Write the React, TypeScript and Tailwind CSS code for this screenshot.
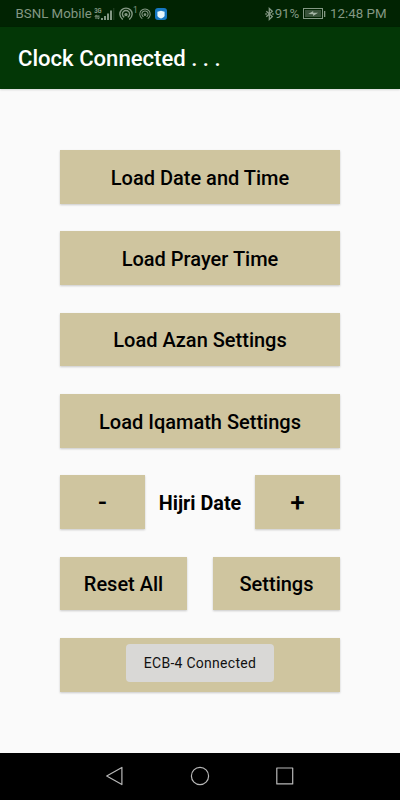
import type { ReactNode } from "react";
import { clsx } from "clsx";

function PadButton({ children, className }: { children?: ReactNode; className?: string }) {
  return (
    <button
      className={clsx(
        "flex h-[53.6px] items-center justify-center bg-[#cfc59f] pt-[1.5px] font-medium text-black shadow-[0_1px_2px_rgba(0,0,0,0.2)]",
        className
      )}
    >
      {children}
    </button>
  );
}

function SignalIcon() {
  return (
    <svg width="21" height="14" viewBox="0 0 21 14" fill="#849884">
      <text x="0.2" y="5.6" fontSize="7" fontWeight="700" fontFamily="Roboto, sans-serif" textLength="7.5" lengthAdjust="spacingAndGlyphs">3G</text>
      <path d="M.5 9.2l2-1.8v1.2h3v1.2h-5zM6 10.8l-2 1.8v-1.1H1v-1.1h5z" />
      <path d="M7 11h2v2H7zM10 9h2v4h-2zM13 6.5h2V13h-2zM16 3.5h2V13h-2z" />
      <path d="M19.3 1h1v12h-1z" opacity="0.3" />
    </svg>
  );
}

function HotspotIcon({ size, strokeWidth }: { size: number; strokeWidth: number }) {
  return (
    <svg width={size} height={size} viewBox="0 0 14 14" fill="none" stroke="#849884" strokeWidth={strokeWidth} strokeLinecap="round">
      <path d="M3.4 12.1a6.1 6.1 0 1 1 7.2 0" />
      <path d="M4.8 9.9a3.6 3.6 0 1 1 4.4 0" />
      <circle cx="7" cy="7.6" r="1" fill="#849884" />
    </svg>
  );
}

function StatusBar() {
  return (
    <div className="flex h-[27px] items-center bg-[#012302] pl-[15.5px] pr-[13.5px] pt-[1px] text-[13.3px] text-[#849884]">
      <span className="w-[76px] whitespace-nowrap">BSNL Mobile</span>
      <span className="ml-[2px]"><SignalIcon /></span>
      <span className="ml-[4px]"><HotspotIcon size={14} strokeWidth={1.4} /></span>
      <span className="mb-[7px] ml-[0.5px] w-[4px] text-[8.5px] leading-none">1</span>
      <span className="ml-[1.5px]"><HotspotIcon size={12} strokeWidth={1.2} /></span>
      {/* security app badge */}
      <span className="ml-[4px] flex size-[12.5px] items-center justify-center rounded-[3px] bg-[#1678c2]">
        <svg width="8" height="9" viewBox="0 0 8 9">
          <path d="M4 .7L7.6 1.8v3.4C7.6 6.9 5.8 8 4 8.5 2.2 8 .4 6.9.4 5.2V1.8z" fill="#e6f6fb" />
        </svg>
      </span>
      <div className="ml-auto flex items-center">
        <svg width="9" height="14" viewBox="0 0 9 14" fill="none" stroke="#849884" strokeWidth="1.3">
          <path d="M1.3 4.2l6 5.4-3 2.8V1.5l3 2.8-6 5.4" />
          <path d="M.3 7h1.5M7.2 7h1.5" />
        </svg>
        <span className="ml-[1px] tracking-[-0.1px]">91%</span>
        <svg className="ml-[4px]" width="23" height="12" viewBox="0 0 23 12">
          <rect x="0.5" y="0.5" width="19" height="10" fill="none" stroke="#849884" />
          <rect x="2" y="2" width="16" height="7" fill="#385239" />
          <path d="M5.2 6l5-3v1.8h4.9l-5 3.1V6.2z" fill="#a2b2a2" />
          <path d="M21 3h1.3v6H21z" fill="#849884" />
        </svg>
        <span className="ml-[4px] whitespace-nowrap">12:48 PM</span>
      </div>
    </div>
  );
}

function NavBar() {
  return (
    <div className="flex h-[47.5px] items-center justify-center bg-black">
      <svg width="188" height="20" viewBox="0 0 188 20" fill="none" stroke="#b8b8b8" strokeWidth="1.2" strokeLinejoin="round">
        <path d="M.7 10L15.9 1.4v17.2z" />
        <circle cx="94" cy="10" r="8.6" />
        <rect x="170.8" y="2" width="15.9" height="15.9" />
      </svg>
    </div>
  );
}

export default function App() {
  return (
    <div className="flex h-[800px] w-[400px] flex-col overflow-hidden bg-[#fafafa] font-[Roboto,sans-serif]">
      <StatusBar />
      <header className="z-10 flex h-[62px] items-center bg-[#033706] px-[18px] shadow-[0_1px_2px_rgba(0,0,0,0.15)]">
        <h1 className="pt-[2px] text-[22.1px] font-medium text-white">Clock Connected . . .</h1>
      </header>

      <main className="flex flex-1 flex-col gap-[27.75px] px-[60px] pt-[61px] text-[20px]">
        <PadButton>Load Date and Time</PadButton>
        <PadButton>Load Prayer Time</PadButton>
        <PadButton>Load Azan Settings</PadButton>
        <PadButton>Load Iqamath Settings</PadButton>

        <div className="flex items-center justify-between">
          <PadButton className="w-[85px] text-[26px]">-</PadButton>
          <span className="pt-[3px] text-[19.8px] font-bold text-black">Hijri Date</span>
          <PadButton className="w-[85px] text-[26px]">+</PadButton>
        </div>

        <div className="flex justify-between">
          <PadButton className="w-[127px]">Reset All</PadButton>
          <PadButton className="w-[127px]">Settings</PadButton>
        </div>

        <div className="relative">
          <PadButton className="w-full" />
          <div className="absolute left-[66px] top-[6px] flex h-[37.5px] w-[148px] items-center justify-center rounded-[4px] bg-[#d9d8d6] pt-[1px] text-[14px] tracking-[0.27px] text-[#111]">
            ECB-4 Connected
          </div>
        </div>
      </main>

      <NavBar />
    </div>
  );
}
